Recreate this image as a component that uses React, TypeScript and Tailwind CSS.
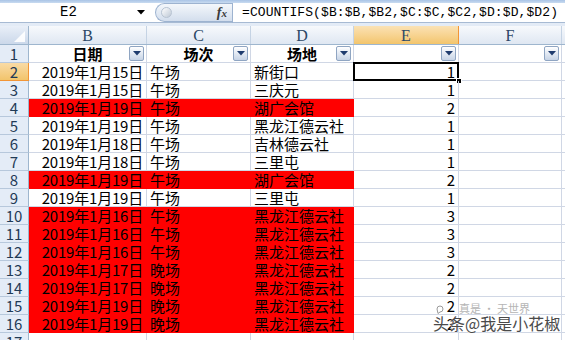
type Row = { n: number; date: string; slot: string; venue: string; count: number; red: boolean };

const rows: Row[] = [
  { n: 2, date: "2019年1月15日", slot: "午场", venue: "新街口", count: 1, red: false },
  { n: 3, date: "2019年1月15日", slot: "午场", venue: "三庆元", count: 1, red: false },
  { n: 4, date: "2019年1月19日", slot: "午场", venue: "湖广会馆", count: 2, red: true },
  { n: 5, date: "2019年1月19日", slot: "午场", venue: "黑龙江德云社", count: 1, red: false },
  { n: 6, date: "2019年1月18日", slot: "午场", venue: "吉林德云社", count: 1, red: false },
  { n: 7, date: "2019年1月18日", slot: "午场", venue: "三里屯", count: 1, red: false },
  { n: 8, date: "2019年1月19日", slot: "午场", venue: "湖广会馆", count: 2, red: true },
  { n: 9, date: "2019年1月19日", slot: "午场", venue: "三里屯", count: 1, red: false },
  { n: 10, date: "2019年1月16日", slot: "午场", venue: "黑龙江德云社", count: 3, red: true },
  { n: 11, date: "2019年1月16日", slot: "午场", venue: "黑龙江德云社", count: 3, red: true },
  { n: 12, date: "2019年1月16日", slot: "午场", venue: "黑龙江德云社", count: 3, red: true },
  { n: 13, date: "2019年1月17日", slot: "晚场", venue: "黑龙江德云社", count: 2, red: true },
  { n: 14, date: "2019年1月17日", slot: "晚场", venue: "黑龙江德云社", count: 2, red: true },
  { n: 15, date: "2019年1月19日", slot: "晚场", venue: "黑龙江德云社", count: 2, red: true },
  { n: 16, date: "2019年1月19日", slot: "晚场", venue: "黑龙江德云社", count: 2, red: true },
];

function FilterButton() {
  return (
    <div className="absolute right-[2px] top-[1px] flex h-[15px] w-[15px] items-center justify-center rounded-[2px] border border-[#8fa5c2] bg-gradient-to-b from-[#ffffff] to-[#c7d4e6]">
      <svg width="8" height="5" viewBox="0 0 8 5">
        <path d="M0 0 H8 L4 4.5 Z" fill="#1f3c6e" />
      </svg>
    </div>
  );
}

function RowHeader({ n, active }: { n: number; active?: boolean }) {
  return (
    <div
      className={
        active
          ? "flex w-[29px] shrink-0 items-end justify-center border-r border-b border-[#f29536] bg-gradient-to-b from-[#f9dba5] to-[#f2c46b] text-[#1f3a56]"
          : "flex w-[29px] shrink-0 items-end justify-center border-r border-b border-r-[#9eb6ce] border-b-[#b7c8dc] bg-[#e4ecf7] text-[#1f3a56]"
      }
    >
      {n}
    </div>
  );
}

export default function App() {
  const cell = "flex shrink-0 items-end border-r border-b px-[3px] whitespace-nowrap";
  const grid = "border-[#d0d7e5]";

  return (
    <div className="relative h-[340px] w-[565px] overflow-hidden bg-white font-['Noto_Sans_CJK_SC',sans-serif] text-[15px] leading-[17px] text-black">
      {/* formula bar */}
      <div className="h-[3px] bg-gradient-to-b from-[#a9c4e6] to-[#c9dbf0]" />
      <div className="flex h-[20px] items-center border-b border-[#a7bad3] bg-white">
        <div className="flex w-[150px] items-center">
          <span className="w-[137px] text-center font-['Liberation_Mono',monospace] text-[14px]">E2</span>
          <svg width="8" height="5" viewBox="0 0 8 5">
            <path d="M0 0 H8 L4 4.5 Z" fill="#000" />
          </svg>
        </div>
        <div className="ml-[5px] flex h-[19px] w-[77px] items-center rounded-l-full border border-r-0 border-[#9db3d0] bg-gradient-to-b from-[#f4f7fb] to-[#d3deed] pl-[5px] pr-[5px]">
          <div className="h-[11px] w-[11px] rounded-full border border-[#b7c3d2] bg-gradient-to-br from-[#ffffff] to-[#bfc9d6]" />
          <span className="ml-auto font-['Liberation_Serif',serif] text-[14px] italic font-bold text-[#3a3a3a]">
            f<span className="text-[11px]">x</span>
          </span>
        </div>
        <div className="h-[20px] w-px bg-[#9db3d0]" />
        <div className="pl-[9px] font-['Liberation_Mono',monospace] text-[13px] tracking-[0.1px]">
          =COUNTIFS($B:$B,$B2,$C:$C,$C2,$D:$D,$D2)
        </div>
      </div>
      <div className="h-[3px] bg-[#e3ebf6]" />

      {/* column headers */}
      <div className="flex h-[19px] border-b border-[#9eb6ce] text-[#2b4766]">
        <div className="relative w-[29px] shrink-0 border-r border-[#9eb6ce] bg-gradient-to-b from-[#e9eff8] to-[#cbd8ea]">
          <svg className="absolute right-[3px] bottom-[2px]" width="11" height="11" viewBox="0 0 11 11">
            <path d="M11 0 V11 H0 Z" fill="#ffffff" opacity="0.9" />
          </svg>
        </div>
        {[
          { l: "B", w: "w-[118px]" },
          { l: "C", w: "w-[104px]" },
          { l: "D", w: "w-[103px]" },
        ].map((c) => (
          <div
            key={c.l}
            className={`${c.w} flex shrink-0 items-end justify-center border-r border-[#c5d3e4] bg-gradient-to-b from-[#f7f9fc] to-[#dfe7f2] font-['Liberation_Serif',serif] text-[16px]`}
          >
            {c.l}
          </div>
        ))}
        <div className="flex w-[105px] shrink-0 items-end justify-center border-r border-[#f29536] bg-gradient-to-b from-[#fbe2b4] to-[#f3c56c] font-['Liberation_Serif',serif] text-[16px]">
          E
        </div>
        <div className="flex w-[103px] shrink-0 items-end justify-center border-r border-[#c5d3e4] bg-gradient-to-b from-[#f7f9fc] to-[#dfe7f2] font-['Liberation_Serif',serif] text-[16px]">
          F
        </div>
        <div className="flex-1 bg-gradient-to-b from-[#f7f9fc] to-[#dfe7f2]" />
      </div>

      {/* row 1: table headers */}
      <div className="flex h-[18px]">
        <RowHeader n={1} />
        <div className={`${cell} ${grid} relative w-[118px] justify-center font-bold`}>
          日期
          <FilterButton />
        </div>
        <div className={`${cell} ${grid} relative w-[104px] justify-center font-bold`}>
          场次
          <FilterButton />
        </div>
        <div className={`${cell} ${grid} relative w-[103px] justify-center font-bold`}>
          场地
          <FilterButton />
        </div>
        <div className={`${cell} ${grid} relative w-[105px]`}>
          <FilterButton />
        </div>
        <div className={`${cell} ${grid} relative w-[103px]`}>
          <FilterButton />
        </div>
        <div className={`flex-1 border-b ${grid}`} />
      </div>

      {rows.map((r) => {
        const fill = r.red ? "bg-[#ff0000] border-[#ff0000]" : grid;
        return (
          <div key={r.n} className="flex h-[18px]">
            <RowHeader n={r.n} active={r.n === 2} />
            <div className={`${cell} ${fill} w-[118px] justify-end tracking-[-0.2px]`}>{r.date}</div>
            <div className={`${cell} ${fill} w-[104px]`}>{r.slot}</div>
            <div className={`${cell} ${fill} w-[103px]`}>{r.venue}</div>
            <div className={`${cell} ${grid} relative w-[105px] justify-end`}>
              {r.count}
              {r.n === 2 && (
                <>
                  <div className="pointer-events-none absolute left-[-1px] top-[-1px] right-[-1px] bottom-[-1px] border-2 border-black" />
                  <div className="absolute right-[-4px] bottom-[-4px] h-[6px] w-[6px] border border-white bg-black" />
                </>
              )}
            </div>
            <div className={`${cell} ${grid} w-[103px]`} />
            <div className={`flex-1 border-b ${grid}`} />
          </div>
        );
      })}

      <div className="flex h-[18px]">
        <RowHeader n={17} />
        <div className={`${cell} ${grid} w-[118px]`} />
        <div className={`${cell} ${grid} w-[104px]`} />
        <div className={`${cell} ${grid} w-[103px]`} />
        <div className={`${cell} ${grid} w-[105px]`} />
        <div className={`${cell} ${grid} w-[103px]`} />
        <div className="flex-1" />
      </div>

      {/* watermark */}
      <div className="pointer-events-none absolute left-[433px] top-[303px] flex flex-col">
        <div className="flex items-center gap-[14px] pl-[2px]">
          <svg width="10" height="10" viewBox="0 0 10 10">
            <path d="M2 5 a3 3 0 1 1 3 3 L3 9.5 Z" fill="none" stroke="#9a9a9a" strokeWidth="1" />
          </svg>
          <span className="text-[11px] leading-[11px] text-[#b5b5b5]">真是 · 天世界</span>
        </div>
        <span className="text-[16px] leading-[18px] text-[#4a4a4a] [text-shadow:0_0_2px_#fff,0_0_1px_#fff]">
          头条@我是小花椒
        </span>
      </div>
    </div>
  );
}
